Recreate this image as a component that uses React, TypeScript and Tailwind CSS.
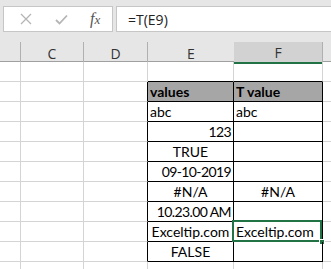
import React from 'react';

type Cell = { text?: string; align?: 'left' | 'right' | 'center'; num?: boolean };

const rows: [Cell, Cell][] = [
    [{ text: 'abc', align: 'left' }, { text: 'abc', align: 'left' }],
    [{ text: '123', align: 'right', num: true }, {}],
    [{ text: 'TRUE', align: 'center' }, {}],
    [{ text: '09-10-2019', align: 'right', num: true }, {}],
    [{ text: '#N/A', align: 'center' }, { text: '#N/A', align: 'center' }],
    [{ text: '10.23.00 AM', align: 'right', num: true }, {}],
    [{ text: 'Exceltip.com', align: 'center' }, { text: 'Exceltip.com', align: 'left' }],
    [{ text: 'FALSE', align: 'center' }, {}],
];

const alignClass = (a?: string) =>
    a === 'right' ? 'justify-end pr-[2px]' : a === 'center' ? 'justify-center' : 'justify-start pl-[2px]';

const cols = 'grid grid-cols-[21px_63px_64px_86px_89px_1fr]';

const App = () => {
    return (
        <div className="w-[331px] h-[269px] overflow-hidden bg-white font-['Lato',sans-serif] text-[14px] leading-[19px] text-black">
            {/* Formula bar */}
            <div className="h-[42px] bg-[#e6e6e6] pt-[6px] flex">
                <div className="ml-[3px] w-[110px] h-[26px] bg-white border border-[#c6c6c6] flex items-center">
                    <svg width="12" height="12" viewBox="0 0 12 12" className="ml-[16px]">
                        <path d="M1 1 L11 11 M11 1 L1 11" stroke="#b5b5b5" strokeWidth="1.3" fill="none" />
                    </svg>
                    <svg width="13" height="11" viewBox="0 0 13 11" className="ml-[23px]">
                        <path d="M1 6 L4.5 9.5 L12 1.5" stroke="#b5b5b5" strokeWidth="1.8" fill="none" />
                    </svg>
                    <span className="ml-[22px] font-['Liberation_Serif',serif] italic text-[16px] text-[#555] leading-none">
                        f<span className="text-[13px]">x</span>
                    </span>
                </div>
                <div className="ml-[3px] flex-1 h-[26px] bg-white border border-r-0 border-[#c6c6c6] flex items-center pl-[11px] font-['Open_Sans',sans-serif] text-[14px] text-[#222]">
                    =T(E9)
                </div>
            </div>

            {/* Column headers */}
            <div className={`${cols} h-[20px] bg-[#e6e6e6] border-b border-[#a0a0a0] font-['Open_Sans',sans-serif] text-[14px] text-[#333]`}>
                <div className="border-r border-[#b0b0b0]" />
                <div className="border-r border-[#b0b0b0] flex items-center justify-center">C</div>
                <div className="border-r border-[#b0b0b0] flex items-center justify-center">D</div>
                <div className="flex items-center justify-center">E</div>
                <div className="border-r border-[#b0b0b0] bg-[#d2d2d2] border-b-2 border-b-[#217346] flex items-center justify-center pt-[1px]">F</div>
                <div />
            </div>

            {/* Row 1 */}
            <div className={`${cols} h-[20px]`}>
                <div className="border-r border-b border-[#d4d4d4]" />
                <div className="border-r border-b border-[#d4d4d4]" />
                <div className="border-r border-b border-[#d4d4d4]" />
                <div className="border-r border-[#d4d4d4] border-b border-b-black" />
                <div className="border-r border-[#d4d4d4] border-b border-b-black" />
                <div className="border-b border-[#d4d4d4]" />
            </div>

            {/* Table header */}
            <div className={`${cols} h-[20px]`}>
                <div className="border-r border-b border-[#d4d4d4]" />
                <div className="border-r border-b border-[#d4d4d4]" />
                <div className="border-b border-[#d4d4d4] border-r border-r-black" />
                <div className="bg-[#a6a6a6] border-r border-b border-black flex items-center pl-[2px] font-bold">values</div>
                <div className="bg-[#a6a6a6] border-r border-b border-black flex items-center pl-[2px] font-bold">T value</div>
                <div className="border-b border-[#d4d4d4]" />
            </div>

            {rows.map(([e, f], i) => (
                <div key={i} className={`${cols} h-[20px]`}>
                    <div className="border-r border-b border-[#d4d4d4]" />
                    <div className="border-r border-b border-[#d4d4d4]" />
                    <div className="border-b border-[#d4d4d4] border-r border-r-black" />
                    <div
                        className={`border-r border-b border-black flex items-center whitespace-nowrap ${alignClass(e.align)} ${
                            e.num ? 'tracking-[-0.6px]' : ''
                        }`}
                    >
                        {e.text}
                    </div>
                    <div className={`relative border-r border-b border-black flex items-center whitespace-nowrap ${alignClass(f.align)}`}>
                        {f.text}
                        {i === 6 && (
                            <>
                                <div className="absolute left-[-2px] top-[-2px] right-0 bottom-[-1px] border-2 border-[#217346]" />
                                <div className="absolute right-[-3px] bottom-[-4px] w-[6px] h-[6px] bg-[#217346] border border-white" />
                            </>
                        )}
                    </div>
                    <div className="border-b border-[#d4d4d4]" />
                </div>
            ))}

            {/* Row after table */}
            <div className={`${cols} h-[20px]`}>
                <div className="border-r border-b border-[#d4d4d4]" />
                <div className="border-r border-b border-[#d4d4d4]" />
                <div className="border-r border-b border-[#d4d4d4]" />
                <div className="border-r border-b border-[#d4d4d4]" />
                <div className="border-r border-b border-[#d4d4d4]" />
                <div className="border-b border-[#d4d4d4]" />
            </div>
        </div>
    );
};

export default App;
